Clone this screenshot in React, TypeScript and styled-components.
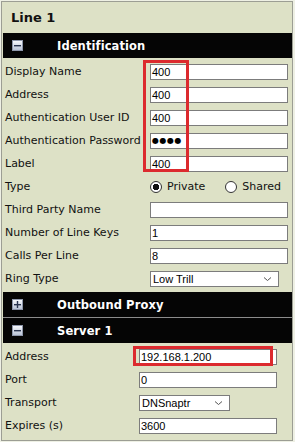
import React from 'react'
import styled, { createGlobalStyle } from 'styled-components'

const GlobalStyle = createGlobalStyle`
  html, body {
    margin: 0;
    padding: 0;
    background: #eef0e4;
  }
`

type Row = {
  label: string
  kind: 'text' | 'password' | 'radio' | 'select'
  value?: string
  width?: number
}

const identification: Row[] = [
  { label: 'Display Name', kind: 'text', value: '400' },
  { label: 'Address', kind: 'text', value: '400' },
  { label: 'Authentication User ID', kind: 'text', value: '400' },
  { label: 'Authentication Password', kind: 'password', value: '●●●●' },
  { label: 'Label', kind: 'text', value: '400' },
  { label: 'Type', kind: 'radio' },
  { label: 'Third Party Name', kind: 'text', value: '' },
  { label: 'Number of Line Keys', kind: 'text', value: '1' },
  { label: 'Calls Per Line', kind: 'text', value: '8' },
  { label: 'Ring Type', kind: 'select', value: 'Low Trill', width: 129 }
]

const server: Row[] = [
  { label: 'Address', kind: 'text', value: '192.168.1.200' },
  { label: 'Port', kind: 'text', value: '0' },
  { label: 'Transport', kind: 'select', value: 'DNSnaptr', width: 91 },
  { label: 'Expires (s)', kind: 'text', value: '3600' }
]

const ToggleIcon = ({ open }: { open: boolean }) => (
  <Toggle>
    <svg width='7' height='7' viewBox='0 0 7 7'>
      <rect x='0' y='3' width='7' height='1.4' fill='#2a3550' />
      {!open && <rect x='2.8' y='0' width='1.4' height='7' fill='#2a3550' />}
    </svg>
  </Toggle>
)

const Chevron = () => (
  <svg width='9' height='6' viewBox='0 0 9 6'>
    <path d='M1 1.5 L4.5 4.5 L8 1.5' fill='none' stroke='#555' strokeWidth='1' />
  </svg>
)

const Field = ({ row }: { row: Row }) => {
  if (row.kind === 'radio') {
    return (
      <Cell>
        <RadioOption>
          <RadioCircle $checked />
          Private
        </RadioOption>
        <RadioOption>
          <RadioCircle />
          Shared
        </RadioOption>
      </Cell>
    )
  }
  if (row.kind === 'select') {
    return (
      <Cell>
        <SelectBox $width={row.width}>
          <span>{row.value}</span>
          <Chevron />
        </SelectBox>
      </Cell>
    )
  }
  return (
    <Cell>
      <TextBox $password={row.kind === 'password'}>{row.value}</TextBox>
    </Cell>
  )
}

const Section = ({
  title,
  open,
  divider,
  rows,
  labelWidth,
  children
}: {
  title: string
  open: boolean
  divider?: boolean
  rows?: Row[]
  labelWidth?: number
  children?: React.ReactNode
}) => (
  <>
    <SectionBar $divider={divider}>
      <ToggleIcon open={open} />
      <BarTitle>{title}</BarTitle>
    </SectionBar>
    {open && rows && (
      <Rows $labelWidth={labelWidth ?? 147} $bottom={rows.length > 5 ? 2 : 3}>
        {rows.map(row => (
          <React.Fragment key={row.label}>
            <Label>{row.label}</Label>
            <Field row={row} />
          </React.Fragment>
        ))}
        {children}
      </Rows>
    )}
  </>
)

const App = () => {
  return (
    <>
      <GlobalStyle />
      <Panel>
        <Title>Line 1</Title>
        <Section title='Identification' open rows={identification} labelWidth={147}>
          <Highlight $left={140} $top={2} $width={46} $height={112} />
        </Section>
        <Section title='Outbound Proxy' open={false} />
        <Section title='Server 1' open divider rows={server} labelWidth={136}>
          <Highlight $left={130} $top={3} $width={140} $height={20} />
        </Section>
      </Panel>
    </>
  )
}

const Panel = styled.div`
  margin: 1px 0 0 1px;
  width: 292px;
  box-sizing: border-box;
  border: 1px solid #9c9e94;
  padding-left: 1px;
  background: #dde1c6;
  font-family: 'DejaVu Sans', Verdana, sans-serif;
  color: #111;
`

const Title = styled.div`
  height: 31px;
  display: flex;
  align-items: center;
  padding-left: 8px;
  font-size: 13px;
  font-weight: bold;
`

const SectionBar = styled.div<{ $divider?: boolean }>`
  height: 25px;
  display: flex;
  align-items: center;
  background: #050505;
  border-top: ${p => (p.$divider ? '1px solid #8c8c8c' : 'none')};
  color: #fff;
`

const Toggle = styled.span`
  width: 11px;
  height: 11px;
  box-sizing: border-box;
  margin-left: 9px;
  display: flex;
  align-items: center;
  justify-content: center;
  border: 1px solid #8e97ab;
  background: linear-gradient(#f6f8fc, #b9c3d6);
`

const BarTitle = styled.span`
  margin-left: 34px;
  font-size: 11.5px;
  font-weight: bold;
  letter-spacing: 0.1px;
`

const Rows = styled.div<{ $labelWidth: number; $bottom: number }>`
  position: relative;
  display: grid;
  grid-template-columns: ${p => p.$labelWidth}px 1fr;
  grid-auto-rows: 23px;
  padding: 2px 0 ${p => p.$bottom}px;
`

const Label = styled.div`
  display: flex;
  align-items: center;
  padding-left: 2px;
  font-size: 11px;
  white-space: nowrap;
`

const Cell = styled.div`
  display: flex;
  align-items: center;
`

const TextBox = styled.div<{ $password?: boolean }>`
  width: 138px;
  height: 16px;
  box-sizing: border-box;
  display: flex;
  align-items: center;
  padding-left: 1px;
  border: 1px solid #7c7c7c;
  background: #fff;
  font-family: ${p => (p.$password ? "'DejaVu Sans'" : "'Liberation Sans'")}, sans-serif;
  font-size: ${p => (p.$password ? '8px' : '11px')};
  letter-spacing: ${p => (p.$password ? '0.5px' : '0')};
  color: #000;
`

const SelectBox = styled.div<{ $width?: number }>`
  width: ${p => p.$width ?? 129}px;
  height: 16px;
  box-sizing: border-box;
  display: flex;
  align-items: center;
  justify-content: space-between;
  padding: 0 6px 0 2px;
  border: 1px solid #7c7c7c;
  background: #fff;
  font-family: 'Liberation Sans', sans-serif;
  font-size: 11px;
  color: #000;
`

const RadioOption = styled.span`
  display: flex;
  align-items: center;
  gap: 5px;
  margin-right: 20px;
  font-size: 11px;
`

const RadioCircle = styled.span<{ $checked?: boolean }>`
  width: 12px;
  height: 12px;
  box-sizing: border-box;
  border-radius: 50%;
  border: 1px solid #333;
  background: ${p =>
    p.$checked ? 'radial-gradient(circle, #111 0 3px, #fff 3.5px)' : '#fff'};
`

const Highlight = styled.div<{
  $left: number
  $top: number
  $width: number
  $height: number
}>`
  position: absolute;
  left: ${p => p.$left}px;
  top: ${p => p.$top}px;
  width: ${p => p.$width}px;
  height: ${p => p.$height}px;
  box-sizing: border-box;
  border: 3px solid #dc2a2e;
  pointer-events: none;
`

export default App
